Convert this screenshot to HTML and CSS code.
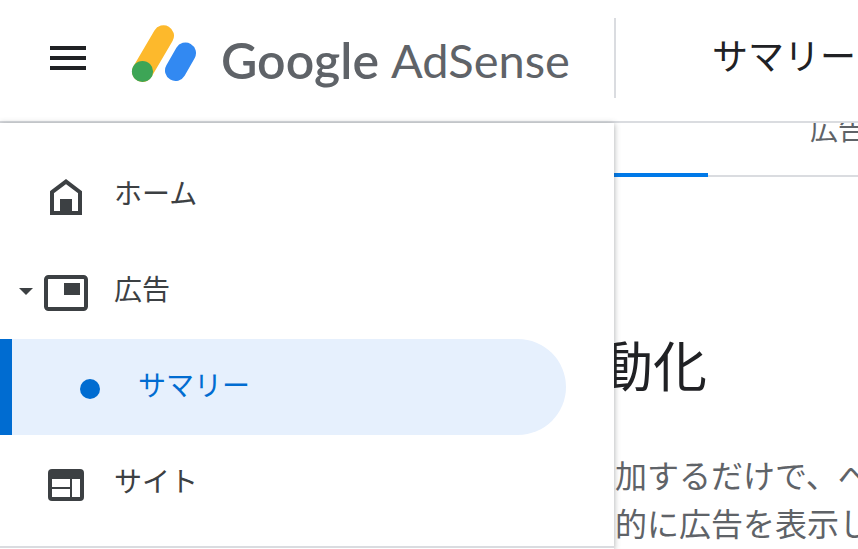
FILE: index.html
```html
<!DOCTYPE html>
<html lang="ja">
<head>
<meta charset="utf-8">
<meta name="viewport" content="width=device-width, initial-scale=1">
<title>Google AdSense</title>
<link rel="stylesheet" href="styles.css">
</head>
<body>
<header class="topbar">
  <button class="menu-button" type="button" aria-label="メニュー">
    <svg width="36" height="24" viewBox="0 0 36 24"><path d="M0 0h36v4H0zM0 10h36v4H0zM0 20h36v4H0z" fill="#202124"/></svg>
  </button>
  <a class="brand" href="#">
    <svg class="brand-mark" width="66" height="58" viewBox="0 0 66 58" aria-hidden="true">
      <path d="M11.5 46.5 32.5 10.7" stroke="#fdb92c" stroke-width="21" stroke-linecap="round"/>
      <path d="M44.5 45.5 54.5 28" stroke="#3289f2" stroke-width="21" stroke-linecap="round"/>
      <circle cx="11.5" cy="46.5" r="10.6" fill="#3da556"/>
    </svg>
    <span class="brand-google">Google</span>
    <span class="brand-product">AdSense</span>
  </a>
  <div class="page-title">サマリー</div>
</header>
<div class="stage">
  <main class="content">
    <nav class="tabs">
      <a class="tab tab-selected" href="#" aria-label="サマリー"></a>
      <a class="tab" href="#">広告</a>
    </nav>
    <section class="intro">
      <h1>自動化</h1>
      <p>を追加するだけで、ペ<br>自動的に広告を表示し</p>
    </section>
  </main>
  <nav class="drawer">
    <ul class="nav-list">
      <li><a class="nav-item" href="#">
        <span class="nav-icon"><svg width="32" height="36" viewBox="0 0 32 36"><path d="M2 13.2 16 2.6l14 10.6V34H2z" fill="none" stroke="#3c4043" stroke-width="4"/><path d="M10 20h12v14H10z" fill="#3c4043"/></svg></span>
        <span>ホーム</span></a></li>
      <li><a class="nav-item" href="#">
        <svg class="caret" width="14" height="7" viewBox="0 0 14 7"><path d="M0 0h14L7 7z" fill="#3c4043"/></svg>
        <span class="nav-icon"><svg width="44" height="36" viewBox="0 0 44 36"><rect x="2" y="2" width="40" height="32" rx="2.5" fill="none" stroke="#3c4043" stroke-width="4"/><path d="M20 8h16v12H20z" fill="#3c4043"/></svg></span>
        <span>広告</span></a></li>
      <li><a class="nav-item nav-child" href="#" aria-current="page">
        <span class="dot"></span>
        <span>サマリー</span></a></li>
      <li><a class="nav-item" href="#">
        <span class="nav-icon"><svg width="36" height="32" viewBox="0 0 36 32"><rect width="36" height="32" rx="4" fill="#3c4043"/><path d="M4 10h18v8H4zM4 20h18v8H4zM24 10h8v18h-8z" fill="#fff"/></svg></span>
        <span>サイト</span></a></li>
    </ul>
  </nav>
</div>
</body>
</html>
```
FILE: styles.css
```css
* {
  box-sizing: border-box;
}

body {
  margin: 0;
  min-height: 100vh;
  display: flex;
  flex-direction: column;
  overflow: hidden;
  background: #fff;
  color: #3c4043;
  font-family: Roboto, "Noto Sans CJK JP", sans-serif;
  font-size: 28px;
}

a {
  color: inherit;
  text-decoration: none;
}

.topbar {
  display: flex;
  align-items: center;
  height: 123px;
  padding-bottom: 5px;
  border-bottom: 2px solid #dadce0;
  white-space: nowrap;
}

.menu-button {
  display: flex;
  margin-left: 42px;
  padding: 8px;
  border: 0;
  background: none;
}

.brand {
  display: flex;
  align-items: center;
  flex: none;
  width: 485px;
  height: 80px;
  margin-left: 37px;
  border-right: 2px solid #dadce0;
  color: #5f6368;
  font-family: Lato, sans-serif;
  font-size: 47px;
  line-height: 60px;
}

.brand-mark {
  flex: none;
  margin: 0 24px 8px 0;
  fill: none;
}

.brand-google,
.brand-product {
  padding-top: 4px;
}

.brand-google {
  font-size: 50px;
  font-weight: 600;
}

.brand-product {
  margin-left: 12px;
}

.page-title {
  margin-left: 96px;
  color: #202124;
  font-size: 36px;
  line-height: 48px;
}

.stage {
  position: relative;
  flex: 1;
}

.tabs {
  display: flex;
  align-items: flex-end;
  height: 54px;
  overflow: hidden;
  color: #5f6368;
  line-height: 40px;
}

.content {
  white-space: nowrap;
}

.tab {
  flex: 1 0 auto;
  padding: 0 102px 24px;
  border-bottom: 2px solid #dadce0;
}

.tab-selected {
  flex: none;
  width: 708px;
  padding: 0;
  border-bottom: 4px solid #0079e8;
}

.intro {
  padding: 152px 0 0 551px;
  color: #5f6368;
}

.intro h1 {
  margin: 0 0 44px -6px;
  color: #202124;
  font-size: 54px;
  font-weight: 400;
  line-height: 80px;
}

.intro p {
  margin: 0;
  font-size: 32px;
  line-height: 48px;
}

.drawer {
  position: absolute;
  inset: 0 auto 0 0;
  width: 614px;
  background: #fff;
  box-shadow: 0 1px 6px rgba(60, 64, 67, 0.45);
}

.nav-list {
  margin: 0;
  padding: 24px 0 15px;
  border-bottom: 2px solid #dadce0;
  list-style: none;
}

.nav-item {
  position: relative;
  display: flex;
  align-items: center;
  height: 96px;
  margin-right: 48px;
  padding-left: 34px;
  line-height: 40px;
}

.nav-icon {
  display: flex;
  justify-content: center;
  width: 64px;
  margin-right: 16px;
  padding-top: 4px;
}

.caret {
  position: absolute;
  left: 19px;
  top: 45px;
}

.nav-child {
  padding-left: 68px;
  border-left: 12px solid #006cd1;
  border-radius: 0 48px 48px 0;
  background: #e6f0fd;
  color: #006cd1;
}

.dot {
  width: 20px;
  height: 20px;
  margin: 4px 38px 0 0;
  border-radius: 50%;
  background: #006cd1;
}
```
